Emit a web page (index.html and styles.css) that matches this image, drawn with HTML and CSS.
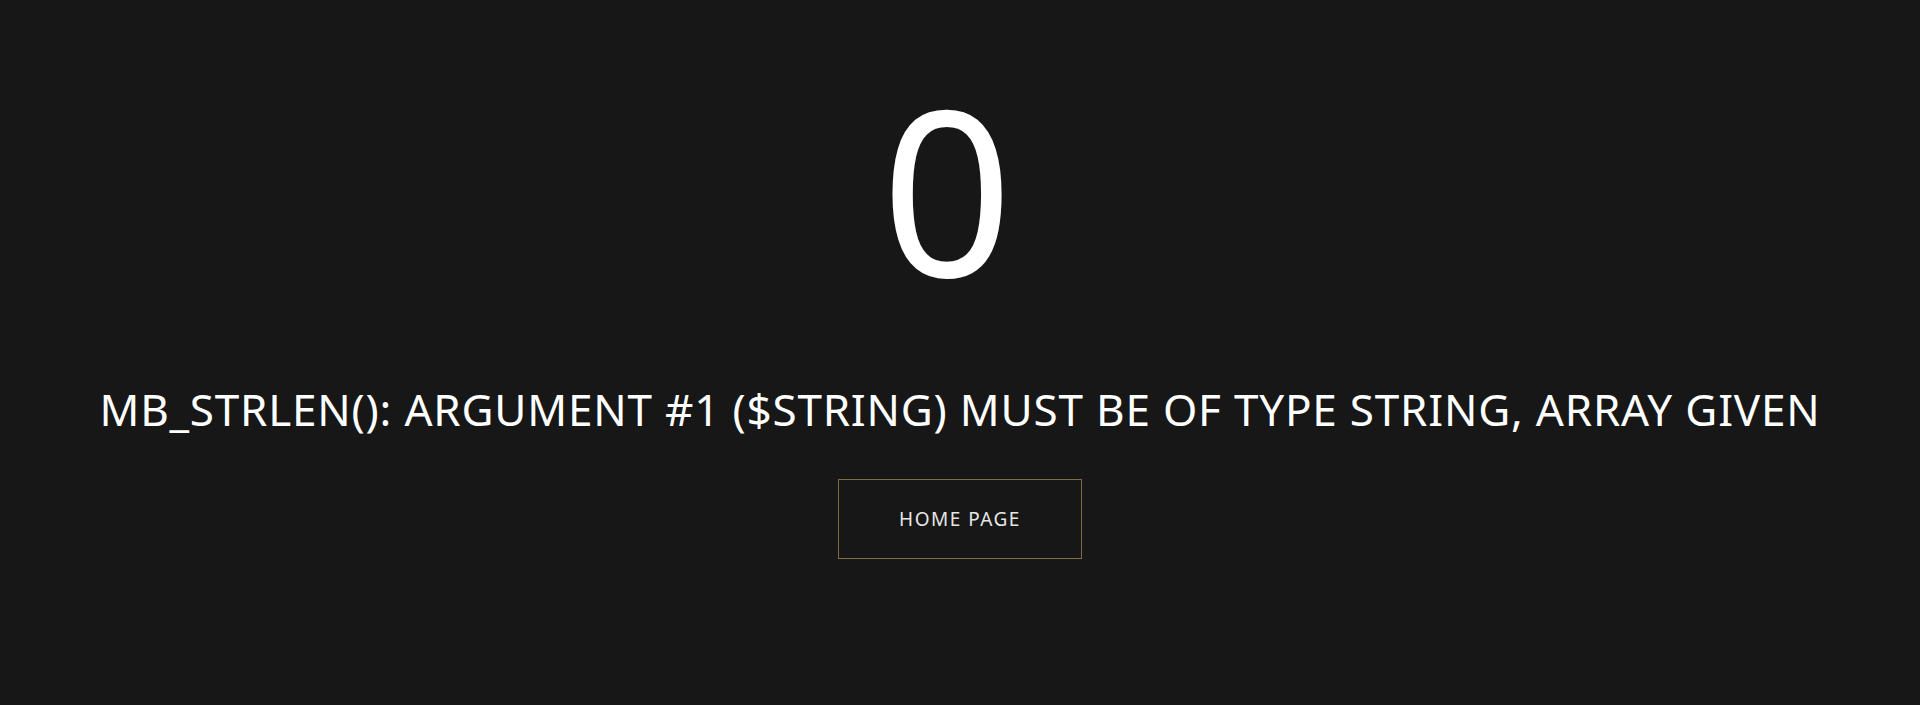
FILE: index.html
```html
<!DOCTYPE html>
<html lang="en">

<head>
  <meta charset="utf-8">
  <meta name="viewport" content="width=device-width, initial-scale=1">
  <title>Error</title>
  <link rel="stylesheet" href="styles.css">
</head>

<body>
  <div class="error-page">
    <h1 class="error-code">0</h1>
    <p class="error-message">mb_strlen(): Argument #1 ($string) must be of type string, array given</p>
    <a class="home-link" href="/">Home page</a>
  </div>
</body>

</html>
```

FILE: styles.css
```css
* {
  margin: 0;
  padding: 0;
  box-sizing: border-box;
}

html,
body {
  height: 100%;
}

body {
  font-family: 'Noto Sans', 'Open Sans', sans-serif;
  background-color: #171717;
  color: #fff;
}

.error-page {
  display: flex;
  flex-direction: column;
  align-items: center;
  padding-top: 73px;
  text-align: center;
}

.error-code {
  font-size: 230px;
  font-weight: 400;
  line-height: 1;
  letter-spacing: 26px;
  height: 270px;
}

.error-message {
  margin-top: 40px;
  font-size: 44px;
  font-weight: 400;
  letter-spacing: 0.8px;
  text-transform: uppercase;
  line-height: 1.2;
}

.home-link {
  margin-top: 43px;
  display: flex;
  align-items: center;
  justify-content: center;
  width: 244px;
  height: 80px;
  border: 1px solid #84694a;
  color: #e6e6e6;
  font-size: 19px;
  letter-spacing: 1.5px;
  text-transform: uppercase;
  text-decoration: none;
}
```
